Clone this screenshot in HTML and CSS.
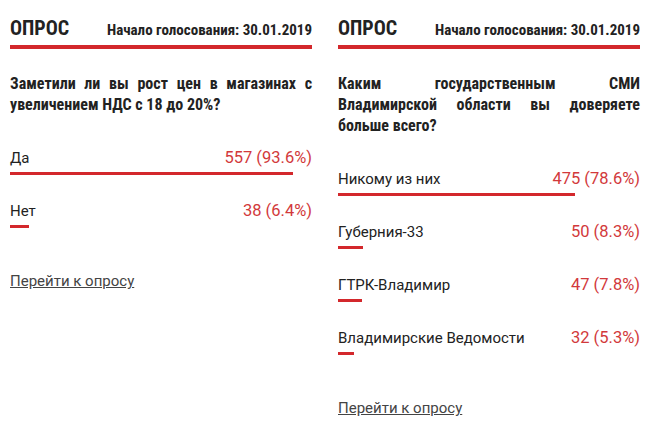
FILE: index.html
```html
<!DOCTYPE html>
<html lang="ru">
  <head>
    <meta charset="UTF-8" />
    <meta name="viewport" content="width=device-width, initial-scale=1.0" />
    <title>Опрос</title>
    <link rel="stylesheet" href="styles.css">
  </head>
  <body>
    <div class="polls">
      <!-- Опрос про НДС -->
      <div class="poll">
        <div class="poll-head">
          <span class="poll-title">ОПРОС</span>
          <span class="poll-date">Начало голосования: 30.01.2019</span>
        </div>
        <p class="poll-question">
          Заметили ли вы рост цен в магазинах с увеличением НДС с 18 до 20%?
        </p>
        <div class="option">
          <div class="option-row">
            <span class="option-name">Да</span>
            <span class="option-value">557 (93.6%)</span>
          </div>
          <div class="option-bar" style="width: 93.6%"></div>
        </div>
        <div class="option">
          <div class="option-row">
            <span class="option-name">Нет</span>
            <span class="option-value">38 (6.4%)</span>
          </div>
          <div class="option-bar" style="width: 6.4%"></div>
        </div>
        <a class="poll-link" href="#">Перейти к опросу</a>
      </div>

      <!-- Опрос про СМИ -->
      <div class="poll">
        <div class="poll-head">
          <span class="poll-title">ОПРОС</span>
          <span class="poll-date">Начало голосования: 30.01.2019</span>
        </div>
        <p class="poll-question">
          Каким государственным СМИ Владимирской области вы доверяете больше всего?
        </p>
        <div class="option">
          <div class="option-row">
            <span class="option-name">Никому из них</span>
            <span class="option-value">475 (78.6%)</span>
          </div>
          <div class="option-bar" style="width: 78.6%"></div>
        </div>
        <div class="option">
          <div class="option-row">
            <span class="option-name">Губерния-33</span>
            <span class="option-value">50 (8.3%)</span>
          </div>
          <div class="option-bar" style="width: 8.3%"></div>
        </div>
        <div class="option">
          <div class="option-row">
            <span class="option-name">ГТРК-Владимир</span>
            <span class="option-value">47 (7.8%)</span>
          </div>
          <div class="option-bar" style="width: 7.8%"></div>
        </div>
        <div class="option">
          <div class="option-row">
            <span class="option-name">Владимирские Ведомости</span>
            <span class="option-value">32 (5.3%)</span>
          </div>
          <div class="option-bar" style="width: 5.3%"></div>
        </div>
        <a class="poll-link" href="#">Перейти к опросу</a>
      </div>
    </div>
  </body>
</html>
```

FILE: styles.css
```css
body {
  font-family: Roboto, "Liberation Sans", sans-serif;
  background-color: #fff;
  color: #222;
  margin: 0;
  padding: 0;
}

.polls {
  display: flex;
  align-items: flex-start;
  gap: 26px;
  padding: 16px 0 0 10px;
}

.poll {
  width: 302px;
}

/* Шапка: заголовок и дата */
.poll-head {
  display: flex;
  justify-content: space-between;
  align-items: baseline;
  height: 25px;
  line-height: 24px;
  padding-bottom: 4px;
  border-bottom: 4px solid #d3282c;
  font-family: "Roboto Condensed", "Liberation Sans Narrow", "DejaVu Sans Condensed", Roboto, sans-serif;
  font-stretch: condensed;
  font-weight: bold;
}

.poll-title {
  font-size: 20px;
}

.poll-date {
  font-size: 15px;
}

.poll-question {
  margin: 24px 0 33px;
  font-family: "Roboto Condensed", "Liberation Sans Narrow", "DejaVu Sans Condensed", Roboto, sans-serif;
  font-stretch: condensed;
  font-size: 16px;
  font-weight: bold;
  line-height: 21px;
  text-align: justify;
}

.option {
  margin-bottom: 26px;
}

.option-row {
  display: flex;
  justify-content: space-between;
  align-items: baseline;
  line-height: 20px;
}

.option-name {
  font-size: 15px;
}

.option-value {
  font-size: 16.5px;
  color: #d2393b;
}

.option-bar {
  height: 3px;
  margin-top: 4px;
  background-color: #d3282c;
}

.poll-link {
  display: inline-block;
  margin-top: 17px;
  font-size: 15px;
  line-height: 20px;
  color: #444;
}
```
